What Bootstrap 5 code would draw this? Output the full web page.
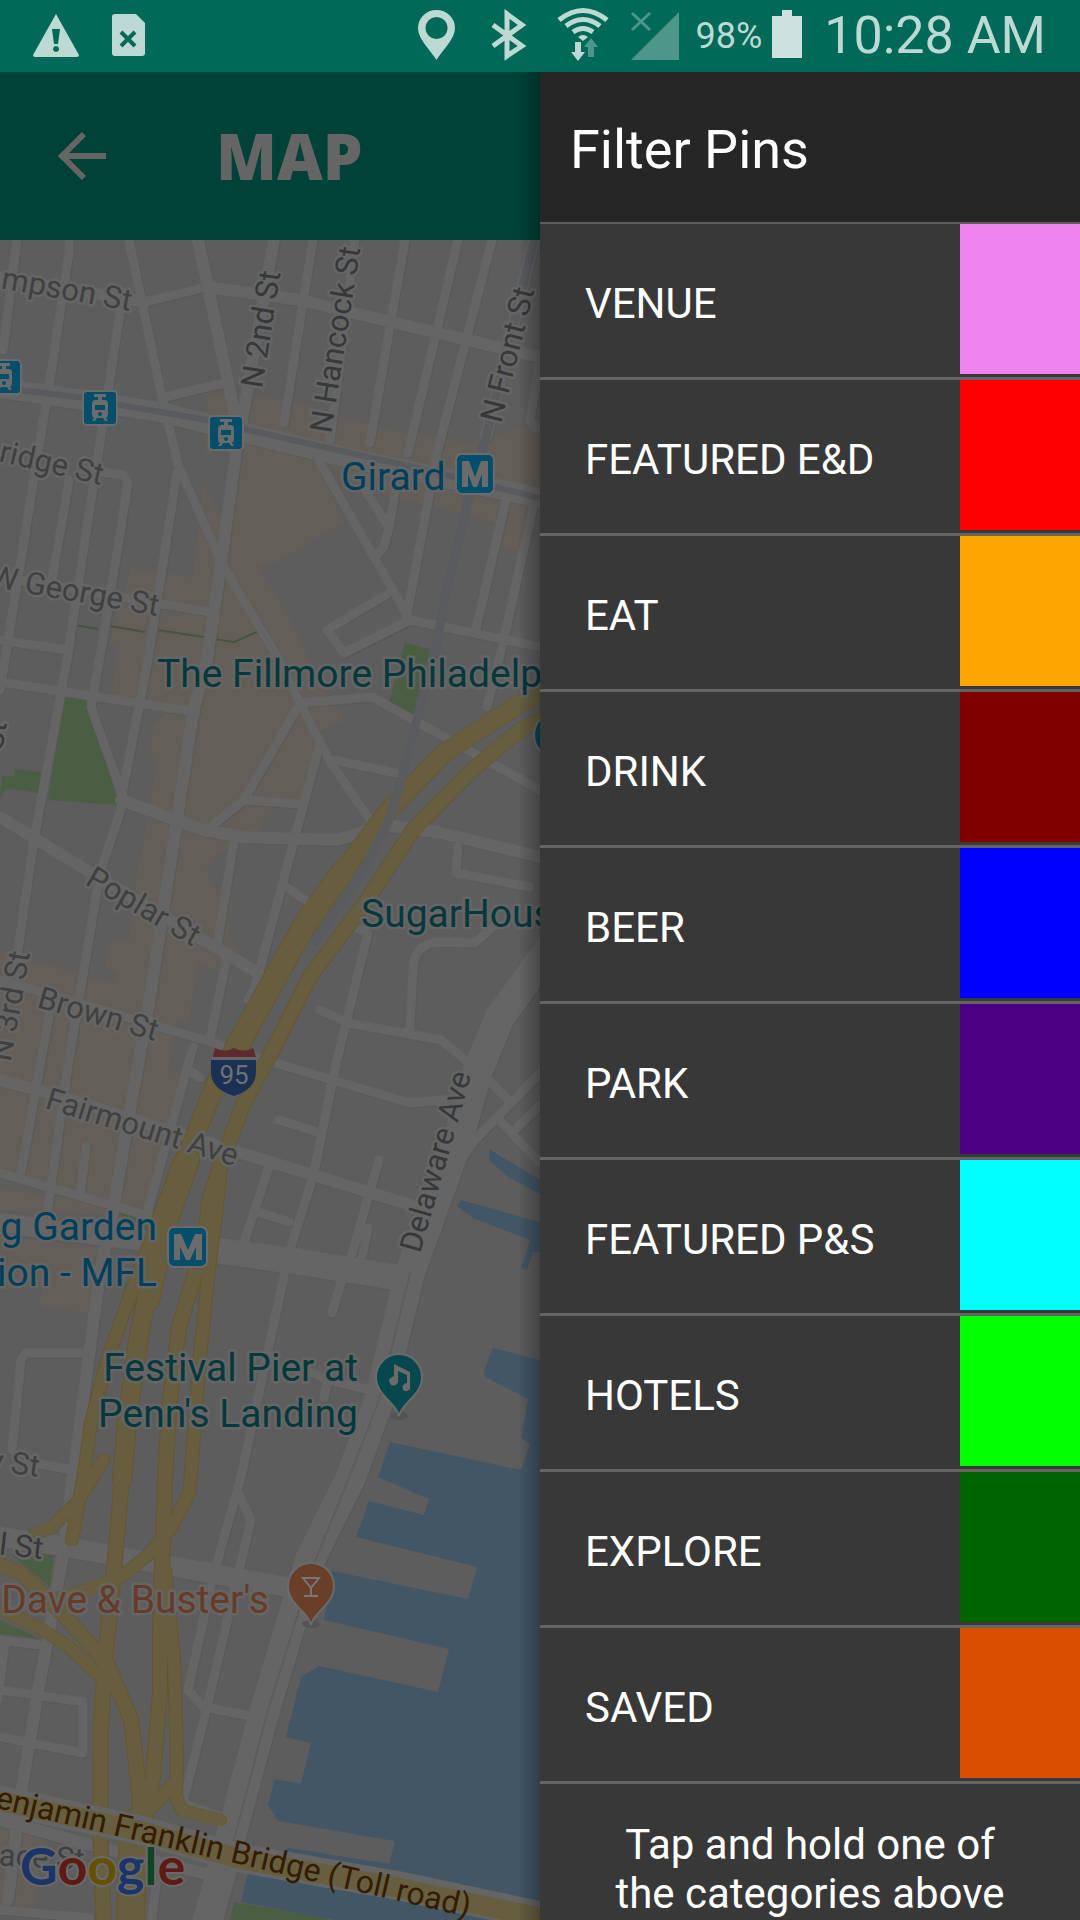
<!DOCTYPE html>
<html lang="en">
<head>
<meta charset="utf-8">
<meta name="viewport" content="width=device-width, initial-scale=1">
<title>Map – Filter Pins</title>
<link rel="stylesheet" href="https://cdn.jsdelivr.net/npm/bootstrap@5.3.0/dist/css/bootstrap.min.css">
<style>
  body { font-family: Roboto, "Noto Sans", sans-serif; background: #383838; }
  svg { display: block; }
  .statusbar { height: 72px; background: #006958; color: #bdd9d4; padding-right: 34px; }
  .statusbar svg { height: 72px; fill: #bdd9d4; }
  .battery-level { font-size: 36px; line-height: 74px; }
  .clock { font-size: 52px; line-height: 78px; }
  .app-bar { height: 168px; background: #004237; color: #656565; padding-left: 58px; }
  .back-btn { width: 50px; }
  .app-title { font-family: "Open Sans", sans-serif; font-weight: 800; font-size: 63px; line-height: 72px; margin-left: 108px; }
  .screen-shade { width: 22px; background: linear-gradient(to right, transparent, rgba(0,0,0,.28)); }
  .map-view { background: #5d5d5d; }
  .drawer { background: #383838; color: #fff; }
  .drawer-title { height: 152px; padding: 6px 30px 0; background: #262626; border-bottom: 2px solid #5c5c5c; font-size: 54px; }
  .filter-row { height: 156px; border: 0; border-bottom: 3px solid #646464; background: #383838; color: #fff; font-size: 42px; padding: 0 0 3px 45px; }
  .filter-name { padding-top: 8px; }
  .swatch { width: 120px; }
  .c-venue { background: #ee82ee; } .c-featured { background: #f00; } .c-eat { background: #ffa500; }
  .c-drink { background: #800000; } .c-beer { background: #00f; } .c-park { background: #4b0082; }
  .c-shops { background: #0ff; } .c-hotels { background: #0f0; } .c-explore { background: #006400; }
  .c-saved { background: #d94e00; }
  .hint { font-size: 42px; line-height: 49px; padding: 36px 60px 0; }

  .tan { fill: #635f58; } .park { fill: #4a5e43; } .water { fill: #435665; }
  .lines { fill: none; stroke-linejoin: round; stroke-linecap: round; }
  .edge-s { stroke: #595959; } .fill-s { stroke: #656565; }
  .edge-h { stroke: #66562f; } .fill-h { stroke: #665e3f; }
  .rail { fill: none; stroke: #595b5e; stroke-width: 6; }
  .rail-wide { stroke-width: 9; }
  .halo { paint-order: stroke; stroke: #656565; stroke-width: 5; stroke-linejoin: round; }
  .street { font-size: 31px; fill: #363839; }
  .street-l { fill: #404040; }
  .poi { font-size: 39px; fill: #06383c; }
  .transit { fill: #003f5c; } .food { fill: #663c28; } .bridge { fill: #331c00; }
  .sign { fill: #024e6b; stroke: #6b6b6b; stroke-width: 2; }
  .glogo { font-family: Lato, sans-serif; font-weight: 700; font-size: 52px; paint-order: stroke; stroke: #696969; stroke-width: 4; }
</style>
<script src="https://cdn.jsdelivr.net/npm/bootstrap@5.3.0/dist/js/bootstrap.bundle.min.js"></script>
</head>
<body>
<div class="vh-100 d-flex flex-column overflow-hidden">
  <div class="statusbar d-flex align-items-center flex-shrink-0">
    <svg width="95" viewBox="0 0 95 72" aria-hidden="true"><path fill-rule="evenodd" d="M56 14 79 55q0 2-2 2H35q-2 0-2-2ZM52 29l2 15h4l2-15ZM56 46a3 3 0 1 0 .1 0Z"/></svg>
    <svg width="66" viewBox="95 0 66 72" aria-hidden="true"><path d="M115 14h21l9 9v30q0 3-3 3h-27q-3 0-3-3V17q0-3 3-3Z"/><path d="m121 32 14 14m0-14-14 14" stroke="#006958" stroke-width="4"/></svg>
    <svg class="ms-auto" width="74" viewBox="400 0 74 72" aria-hidden="true"><path fill-rule="evenodd" d="M435.500 60C430 51 417 39 417 28a18.500 18 0 0 1 37 0c0 11-13 23-18.500 32ZM435.500 17a11 11 0 1 0 .1 0Z"/></svg>
    <svg width="66" viewBox="474 0 66 72" aria-hidden="true"><path d="m492 25 29 21-15 10V14l15 11-29 21" fill="none" stroke="#bdd9d4" stroke-width="5"/></svg>
    <svg width="78" viewBox="540 0 78 72" aria-hidden="true"><g fill="none" stroke="#bdd9d4" stroke-width="5"><path d="M558 20q24-19 48 0M565 26q17-13 34 0M572 32q10-7 20 0"/></g><path d="m577 37 5 4 5-4q-5-4-10 0ZM574 42h6v10h4l-7 9-7-9h4Z"/><path fill="#4d9689" d="M587 57V47h-4l7-9 7 9h-4v10Z"/></svg>
    <svg width="76" viewBox="618 0 76 72" aria-hidden="true"><path fill="#4d9689" d="M678 12v48h-48Z"/><path d="m631 13 18 17m0-17-18 17" stroke="#4d9689" stroke-width="3"/></svg>
    <span class="battery-level">98%</span>
    <svg width="62" viewBox="762 0 62 72" aria-hidden="true"><path fill="#cde2de" d="M782 10h10v6h10v42h-30V16h10Z"/></svg>
    <span class="clock">10:28 AM</span>
  </div>

  <div class="d-flex flex-grow-1 overflow-hidden">
    <main class="w-50 d-flex flex-column position-relative overflow-hidden">
      <header class="app-bar d-flex align-items-center flex-shrink-0">
        <button type="button" class="back-btn btn p-0 border-0" aria-label="Back"><svg width="50" height="50" viewBox="0 0 50 50"><path d="M48 25H5M26 3 4 25l22 22" fill="none" stroke="#656565" stroke-width="6"/></svg></button>
        <h1 class="app-title mb-0">MAP</h1>
      </header>
      <div class="map-view flex-grow-1 overflow-hidden">
      <svg width="100%" height="100%" viewBox="0 240 540 1680" preserveAspectRatio="xMinYMin slice" role="img" aria-label="Street map">
        <defs>
          <g id="streets">
            <g stroke-width="9">
              <path d="M17 240 3 350M69 240V253L50 380 38 453 5 660 0 690M129 240 162 397 179 467 222 563 279 660 300 703 331 763 375 827M313 240 284 423M355 240 330 440M405 240 370 443M458 240 408 453M492 240 437 453 406 620M145 302 207 287M165 397 224 383M121 307 90 507 67 660 34 840 17 957"/>
              <path d="M69 480 52 580M83 470 124 475 128 483 103 640 91 707 124 800 100 873 69 1060 48 1207M177 473 148 660 121 800M0 577 210 612M0 640 65 650M0 682 196 712M317 457 410 620 540 647M410 620 344 653 327 630 389 593M365 490 389 527 384 547 375 557M396 487 389 527M506 500 475 633M534 503 503 643 487 707M540 360 530 420 536 428"/>
              <path d="M300 703 372 697 540 790M296 710 244 800 207 830M244 800 300 804M320 743 255 987 248 1000M334 760 396 773M234 840 217 947M227 957 210 1040M286 887 315 907M52 1000 21 1173M458 847 456 873 530 887M368 933 337 1060 313 1177 289 1253 241 1477 213 1577 188 1690 203 1707 255 1717M356 928 368 933M495 925 475 943 437 942Q413 945 413 970L410 1030M320 1010 348 1023 441 1040 465 1060"/>
              <path d="M0 1173 152 1217M193 1047 148 1210M86 1147 81 1190M269 1167 244 1243M258 1212 289 1222M279 1120 317 1132M379 1160 351 1257M368 1228 362 1257M344 1273 332 1313M189 1070 200 1078M90 1353H26L21 1360 12 1450M34 1463 72 1470M238 1493 251 1520 207 1707 183 1803 220 1817M0 1640 41 1645M0 1690 83 1702V1753L0 1737M5 1643-2 1700M0 1910 90 1918M158 1867 152 1920"/>
              <path d="M482 1073 511 1103 540 1073M511 1103 475 1140 451 1173M499 1120 540 1163M458 1132 475 1140M515 1130 540 1105M0 980 214 1043 275 1063 410 1103 444 1100M310 1372 328 1380 324 1398M328 1380 370 1390"/>
            </g>
            <g stroke-width="12">
              <path d="M198 240 234 410 238 437 222 557 207 660 193 713 177 820 148 1010 127 1127 115 1200 100 1273 76 1453 62 1560 38 1693 21 1793 8 1900M274 240 241 427M207 287 300 300 395 323 540 357M534 240 486 437M121 800 203 830 241 837 337 840 385 825 441 833 540 857M0 817 86 870 258 973M0 1080 48 1093 241 1153 417 1207M0 278 145 302M0 1820 90 1845 210 1875"/>
            </g>
            <path stroke-width="20" d="M0 388 83 400 165 413 241 432 344 457 540 498M0 1223 213 1250 406 1280M0 1537 55 1545 286 1587"/>
            <path stroke-width="26" d="M190 1247 300 1262 400 1278"/>
            <path stroke-width="30" d="M560 935 500 1017 478 1070 458 1140 410 1273 379 1400 351 1477 310 1560 265 1710 220 1877 205 1930"/>
          </g>
          <g id="highways">
            <path stroke-width="14" d="M550 715 520 730 472 770 413 830 365 903 310 977 269 1057 244 1103 227 1147 210 1197 203 1247 179 1327 169 1407 165 1480 164 1510 160 1627 160 1693 153 1777 141 1837 136 1930"/>
            <path stroke-width="12" d="M234 1040 206 1110 179 1163 158 1220 131 1293 107 1360 91 1423 83 1480 72 1540M220 1180 207 1287 200 1357 191 1473 189 1493 172 1527 148 1555 121 1577 93 1588 50 1600M103 1460 79 1500 52 1527 34 1535M165 1570 174 1660 177 1760 176 1797 182 1810 220 1820M176 1780 150 1810 108 1822M-5 1607 38 1627 69 1647 96 1673"/>
            <path stroke-width="14" d="M-5 1563 21 1573 59 1610 107 1663 131 1720 138 1780 141 1820M122 1480 114 1570 105 1660 101 1727 100 1827 104 1930M127 1820 124 1930"/>
            <path stroke-width="18" d="M550 688 510 710 444 753 389 810 344 870 306 923 272 983 241 1040 220 1073 193 1140 172 1200 152 1273 138 1340 127 1423 122 1480"/>
            <path stroke-width="22" d="M344 870 306 923 272 983 241 1040M188 1160 165 1225 148 1300"/>
          </g>
        </defs>
        <path class="tan" d="M207 392 290 400 380 428 470 443 540 423V487L527 507 517 552 503 548 506 510 496 523 379 493 313 457 344 522 275 563 258 565 285 610 327 695 344 720 322 730 317 743 300 803 275 807 257 830 234 840 224 853 215 857 207 870 213 887 234 890 227 927 238 953 220 973 198 963 189 1023 176 1020 169 1072 186 1073 152 1210 100 1200 0 1170V950L31 960 79 973 114 983 119 973 105 967 110 940 129 940 136 880 148 818 157 760 150 758 153 727 165 715 112 693 117 647 107 645 131 568 193 577 203 483 220 517 236 440 205 455Z"/>
        <path class="tan" d="M0 1190 100 1200 120 1215 0 1212ZM0 1237 103 1247 93 1315 38 1305 44 1285 0 1290ZM0 1830 45 1835 33 1915 0 1910Z"/>
        <path class="park" d="M64 697 88 701 119 805 48 800ZM0 797 2 776H14V769L41 772 38 793 7 788ZM405 643 430 649 413 716 389 703ZM12 1555 54 1553 50 1587ZM0 1620 41 1639 0 1634ZM120 1213 148 1217V1230L130 1228ZM234 1902 327 1918V1925H229Z"/>
        <path class="water" d="M489 1149 540 1180V1194L508 1177 489 1160ZM461 1200 540 1222V1252H533L527 1270 521 1268 530 1240 473 1218 457 1206ZM493 1348 540 1360V1920H335L241 1902 248 1872 289 1848 389 1864 395 1841 278 1821 268 1805 275 1779 301 1784 311 1743 286 1737 301 1677 319 1666 438 1692 449 1649 324 1620 332 1571 468 1599 477 1567 356 1537 369 1501 424 1515 429 1499 378 1477 390 1442 521 1470 530 1444 521 1438 528 1399 485 1377 484 1370Z"/>
        <path d="m75 625 23 4m12-3 35 6m12-2 47 7m10 2 20 3 23-10" fill="none" stroke="#44553f" stroke-width="2"/>
        <g class="lines">
          <use href="#streets" class="edge-s" transform="translate(1 1)"/>
          <use href="#streets" class="fill-s"/>
          <path d="M410 1273 379 1400 348 1480 313 1566 268 1710 226 1870" stroke="#5d5d5d" stroke-width="2"/>
          <use href="#highways" class="edge-h" transform="translate(1 0)"/>
          <use href="#highways" class="edge-h" transform="translate(-1 0)"/>
          <use href="#highways" class="fill-h"/>
          <path class="fill-s" stroke-width="29" d="M-10 1798 140 1830 240 1858 400 1886 560 1920"/>
          <path class="fill-h" stroke-width="20" d="M-10 1799 140 1831 240 1859 400 1888 560 1922"/>
        </g>
        <path class="rail" d="M21 390 83 398 120 405 207 420 248 430 413 467 540 498"/>
        <path class="rail rail-wide" d="M534 240 486 437 468 500 446 593 434 657 401 780 389 820 365 867 313 945"/>

        <g id="stations">
          <g id="tram"><rect class="sign" x="83" y="391" width="34" height="34" rx="4"/><path fill="#6b6b6b" fill-rule="evenodd" d="M94 394h12v3h-4v3h3q3 0 3 4v10q0 3-2 4l2 3h-3l-2-3h-6l-2 3h-3l2-3q-2-1-2-4v-10q0-4 3-4h3v-3h-4ZM95 405v5h10v-5ZM100 412a2 2 0 1 0 .1 0Z"/></g>
          <use href="#tram" x="126" y="25"/><use href="#tram" x="-96" y="-31"/>
          <rect class="sign" x="456" y="454" width="38" height="40" rx="6"/><path fill="#6b6b6b" d="M462 461h7l6 16 6-16h7v26h-6v-13l-5 13h-4l-5-13v13h-6Z"/>
          <rect class="sign" x="168" y="1227" width="39" height="40" rx="6"/><path fill="#6b6b6b" d="M174 1234h7l7 16 7-16h7v26h-6v-13l-6 13h-4l-6-13v13h-6Z"/>
        </g>
        <path fill="#5f2a2c" d="M215 1048q10 5 19 0 10 5 19 0l3 9h-43Z"/><path fill="#656565" d="M212 1057h44v4h-44Z"/><path fill="#1a3154" d="M211 1060h45v12q0 17-22 24-23-7-23-24Z"/>
        <text x="234" y="1084" text-anchor="middle" font-size="26" fill="#6e7074">95</text>

        <circle cx="557" cy="735" r="23" fill="#06484e" stroke="#6b6b6b" stroke-width="2"/>
        <ellipse cx="399" cy="1416" rx="9" ry="4" fill="#545454"/>
        <path fill="#06484e" stroke="#6b6b6b" stroke-width="2" d="M399 1416c-3-14-23-20-23-39a23 23 0 0 1 46 0c0 19-20 25-23 39Z"/>
        <path fill="#6b6b6b" d="m394 1364 16 8v17q-3 4-7 1-2-6 4-7v-8l-9-4v11q-2 5-7 3-5-6 3-9Z"/>
        <ellipse cx="311" cy="1624" rx="9" ry="4" fill="#545454"/>
        <path fill="#693f2a" stroke="#6b6b6b" stroke-width="2" d="M311 1625c-3-14-23-20-23-39a23 23 0 0 1 46 0c0 19-20 25-23 39Z"/>
        <path fill="none" stroke="#777" stroke-width="2" d="M303 1578h16l-8 10Zm8 10v8m-7 0h14"/>

        <g class="street halo">
          <text class="street-l" text-anchor="end" transform="translate(130 311) rotate(10)">mpson St</text>
          <text transform="translate(262 389) rotate(-81)">N 2nd St</text>
          <text transform="translate(331 434) rotate(-81)">N Hancock St</text>
          <text transform="translate(501 424) rotate(-76)">N Front St</text>
          <text class="street-l" text-anchor="end" transform="translate(101 485) rotate(13)">ridge St</text>
          <text class="street-l" text-anchor="end" transform="translate(157 616) rotate(10)">W George St</text>
          <text class="street-l" transform="translate(84 884) rotate(30)">Poplar St</text>
          <text class="street-l" transform="translate(36 1007) rotate(16)">Brown St</text>
          <text class="street-l" text-anchor="end" transform="translate(30 953) rotate(-80)">N 3rd St</text>
          <text text-anchor="end" transform="translate(7 723) rotate(-80)">St</text>
          <text class="street-l" transform="translate(44 1108) rotate(17)">Fairmount Ave</text>
          <text transform="translate(420 1254) rotate(-74)">Delaware Ave</text>
          <text class="street-l" text-anchor="end" transform="translate(38 1477) rotate(8)">y St</text>
          <text text-anchor="end" transform="translate(42 1559) rotate(6)">l St</text>
          <text class="street-l" text-anchor="end" transform="translate(84 1870) rotate(3)">Race St</text>
        </g>
        <text class="bridge" font-size="32" text-anchor="end" transform="translate(468 1917) rotate(13)">enjamin Franklin Bridge (Toll road)</text>
        <g class="poi halo">
          <text class="transit" x="341" y="490">Girard</text>
          <text x="157" y="687">The Fillmore Philadelphia</text>
          <text x="361" y="927">SugarHouse</text>
          <g text-anchor="end">
            <text class="transit" x="157" y="1240">g Garden</text>
            <text class="transit" x="157" y="1286">ion - MFL</text>
            <text x="358" y="1381">Festival Pier at</text>
            <text x="358" y="1427">Penn's Landing</text>
            <text class="food" x="269" y="1613">Dave &amp; Buster's</text>
          </g>
        </g>
        <text class="glogo" x="20" y="1885"><tspan fill="#1a3566">G</tspan><tspan fill="#601a16">o</tspan><tspan fill="#665000">o</tspan><tspan fill="#1a3566">g</tspan><tspan fill="#114422">l</tspan><tspan fill="#601a16">e</tspan></text>
      </svg>
      </div>
      <div class="screen-shade position-absolute top-0 bottom-0 end-0"></div>
    </main>

    <aside class="drawer w-50 flex-shrink-0 d-flex flex-column" aria-label="Filter Pins">
      <h2 class="drawer-title d-flex align-items-center flex-shrink-0 mb-0 fw-normal">Filter Pins</h2>
      <button type="button" class="filter-row d-flex align-items-center flex-shrink-0"><span class="filter-name">VENUE</span><span class="swatch c-venue ms-auto h-100"></span></button>
      <button type="button" class="filter-row d-flex align-items-center flex-shrink-0"><span class="filter-name">FEATURED E&amp;D</span><span class="swatch c-featured ms-auto h-100"></span></button>
      <button type="button" class="filter-row d-flex align-items-center flex-shrink-0"><span class="filter-name">EAT</span><span class="swatch c-eat ms-auto h-100"></span></button>
      <button type="button" class="filter-row d-flex align-items-center flex-shrink-0"><span class="filter-name">DRINK</span><span class="swatch c-drink ms-auto h-100"></span></button>
      <button type="button" class="filter-row d-flex align-items-center flex-shrink-0"><span class="filter-name">BEER</span><span class="swatch c-beer ms-auto h-100"></span></button>
      <button type="button" class="filter-row d-flex align-items-center flex-shrink-0"><span class="filter-name">PARK</span><span class="swatch c-park ms-auto h-100"></span></button>
      <button type="button" class="filter-row d-flex align-items-center flex-shrink-0"><span class="filter-name">FEATURED P&amp;S</span><span class="swatch c-shops ms-auto h-100"></span></button>
      <button type="button" class="filter-row d-flex align-items-center flex-shrink-0"><span class="filter-name">HOTELS</span><span class="swatch c-hotels ms-auto h-100"></span></button>
      <button type="button" class="filter-row d-flex align-items-center flex-shrink-0"><span class="filter-name">EXPLORE</span><span class="swatch c-explore ms-auto h-100"></span></button>
      <button type="button" class="filter-row d-flex align-items-center flex-shrink-0"><span class="filter-name">SAVED</span><span class="swatch c-saved ms-auto h-100"></span></button>
      <p class="hint text-center mb-0">Tap and hold one of the categories above</p>
    </aside>
  </div>
</div>
</body>
</html>
